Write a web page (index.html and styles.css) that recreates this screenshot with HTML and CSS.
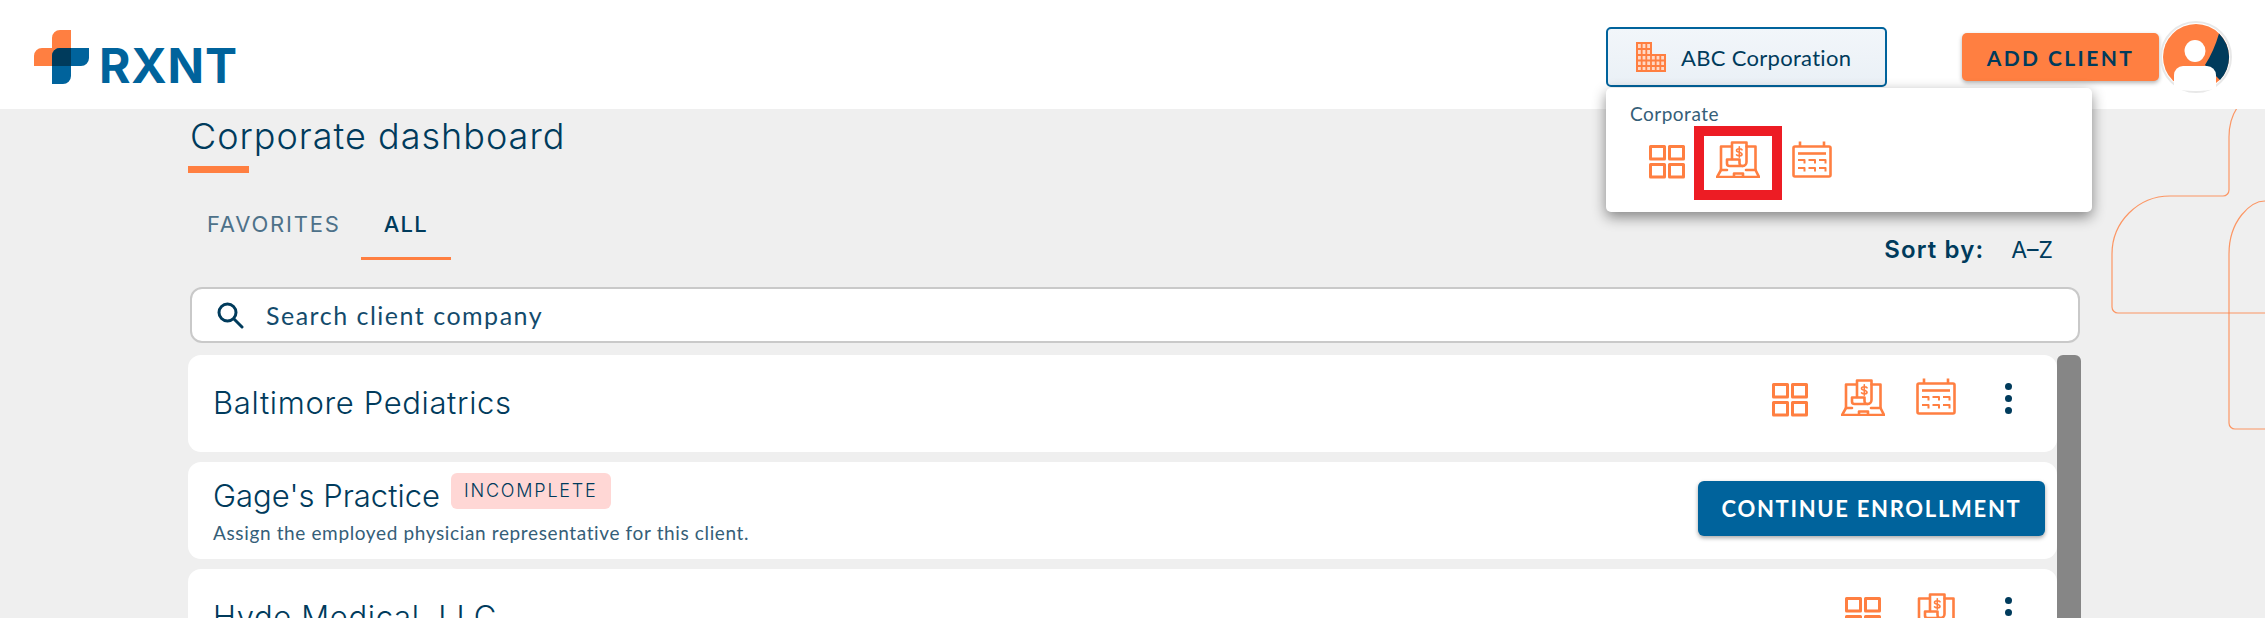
FILE: index.html
```html
<!DOCTYPE html>
<html lang="en">
<head>
    <meta charset="UTF-8">
    <title>Corporate dashboard</title>
    <link rel="stylesheet" href="styles.css">
</head>
<body>
    <svg class="sprites" width="0" height="0">
        <symbol id="ico-grid" viewBox="0 0 36 34">
            <g fill="none" stroke="#ff7f41" stroke-width="3" stroke-linejoin="round">
                <rect x="1.5" y="1.5" width="14" height="12.5"/>
                <rect x="20.5" y="1.5" width="14" height="12.5"/>
                <rect x="1.5" y="19.5" width="14" height="12.5"/>
                <rect x="20.5" y="19.5" width="14" height="12.5"/>
            </g>
        </symbol>
        <symbol id="ico-laptop" viewBox="0 0 44 37">
            <g fill="none" stroke="#ff7f41" stroke-width="2.6" stroke-linejoin="round" stroke-linecap="round">
                <path d="M15.5 5.5H5V29M30.5 5.5H39.5V29"/>
                <path d="M5 29L1 36H43L39.5 29H30M11 29H5"/>
                <path d="M18 36V32.5H27V36"/>
                <path d="M16 18V1.5H30.5V21a4 4 0 0 1-4 4"/>
                <path d="M26.5 25H13.5a2.5 2.5 0 0 1-2.500-2.500V18.500H23.500V22a3 3 0 0 0 3 3"/>
                <path d="M26 8.800C25 7.300 20.700 7.300 20.500 9.300C20.300 11.800 26 10.800 26 13.300C25.800 15.300 21.500 15.300 20.500 13.800M23.300 5.800V16.300" stroke-width="1.600"/>
            </g>
        </symbol>
        <symbol id="ico-calendar" viewBox="0 0 40 37">
            <g fill="none" stroke="#ff7f41" stroke-width="2.600" stroke-linejoin="round">
                <rect x="1.500" y="5.500" width="37" height="30" rx="1.500"/>
                <path d="M8 0.500V5.500M32 0.500V5.500"/>
                <path d="M6 12.500H34"/>
                <path d="M6 19H12.500V22.500M16.500 19H23V22.500M27 19H33.500V22.500M6 27H12.500V30.500M16.500 27H23V30.500M27 27H33.500V30.500" stroke-width="2"/>
            </g>
        </symbol>
    </svg>

    <!-- Decorative outline behind the content -->
    <svg class="backdrop" width="160" height="330" viewBox="0 0 160 330">
        <g fill="none" stroke="#ff7f41" stroke-opacity="0.8" stroke-width="1.200">
            <path d="M132 0Q124 12 124 29V82a6 6 0 0 1-6 6H65C33 88 7 114 7 146V199a6 6 0 0 0 6 6H160"/>
            <path d="M160 93C146 93 124 112 124 146V315a6 6 0 0 0 6 6H160"/>
        </g>
    </svg>

    <header class="topbar">
        <a class="logo" href="#">
            <svg width="56" height="56" viewBox="33 29 56 56">
                <path d="M71 30V66H34V56a8 8 0 0 1 8-8H52V38a8 8 0 0 1 8-8z" fill="#ff7f41"/>
                <path d="M60 48H89V58a8 8 0 0 1-8 8H71V76a8 8 0 0 1-8 8H52V56a8 8 0 0 1 8-8z" fill="#00639c"/>
                <path d="M60 48H71V66H52V56a8 8 0 0 1 8-8z" fill="#003b5c"/>
            </svg>
            <span class="logo-text">RXNT</span>
        </a>
        <div class="topbar-right">
            <div class="company">
                <button class="company-btn">
                    <svg width="30" height="30" viewBox="0 0 30 30">
                        <path d="M1 1H15V13H29V29H1z" fill="#ffd9c6" stroke="#ff7f41" stroke-width="2"/>
                        <path d="M5.700 1V29M10.300 1V29M15 13V29M19.700 13V29M24.300 13V29M1 7H15M1 13H15M1 18.500H29M1 24H29" fill="none" stroke="#ff7f41" stroke-width="1.800"/>
                    </svg>
                    <span>ABC Corporation</span>
                </button>
                <div class="company-menu">
                    <div class="menu-label">Corporate</div>
                    <div class="menu-icons">
                        <svg class="ico-grid"><use href="#ico-grid"/></svg>
                        <div class="highlight"><svg class="ico-laptop"><use href="#ico-laptop"/></svg></div>
                        <svg class="ico-cal"><use href="#ico-calendar"/></svg>
                    </div>
                </div>
            </div>
            <button class="add-client">ADD CLIENT</button>
            <svg class="avatar" width="72" height="72" viewBox="0 0 72 72">
                <circle cx="36" cy="36" r="35" fill="#fff" stroke="#e8e8e8" stroke-width="2"/>
                <circle cx="36" cy="36" r="33" fill="#ff7f41"/>
                <path d="M59 12.500A33 33 0 0 1 60 59L45 44Q54 30 59 12.500z" fill="#003b5c"/>
                <ellipse cx="35" cy="30" rx="10.500" ry="11" fill="#fff"/>
                <path d="M14 68V54a9 9 0 0 1 9-9H47a9 9 0 0 1 9 9V68Q36 72 14 68z" fill="#fff"/>
            </svg>
        </div>
    </header>

    <main class="content">
        <h1 class="page-title">Corporate dashboard</h1>
        <div class="title-rule"></div>

        <div class="toolbar">
            <div class="tabs">
                <div class="tab">FAVORITES</div>
                <div class="tab active">ALL</div>
            </div>
            <div class="sort">
                <span class="sort-label">Sort by:</span>
                <span class="sort-value">A–Z</span>
            </div>
        </div>

        <div class="search">
            <svg width="28" height="28" viewBox="0 0 28 28">
                <circle cx="11.500" cy="11.500" r="8.500" fill="none" stroke="#003b5c" stroke-width="3"/>
                <path d="M18 18L26 26" stroke="#003b5c" stroke-width="3" stroke-linecap="round"/>
            </svg>
            <span>Search client company</span>
        </div>

        <div class="list-wrap">
            <div class="client-list">
                <div class="client">
                    <div class="client-name">Baltimore Pediatrics</div>
                    <div class="client-actions">
                        <svg class="ico-grid"><use href="#ico-grid"/></svg>
                        <svg class="ico-laptop"><use href="#ico-laptop"/></svg>
                        <svg class="ico-cal"><use href="#ico-calendar"/></svg>
                        <div class="dots"><i></i><i></i><i></i></div>
                    </div>
                </div>
                <div class="client pending">
                    <div>
                        <div class="client-head">
                            <div class="client-name">Gage's Practice</div>
                            <span class="badge">INCOMPLETE</span>
                        </div>
                        <div class="client-note">Assign the employed physician representative for this client.</div>
                    </div>
                    <button class="continue">CONTINUE ENROLLMENT</button>
                </div>
                <div class="client">
                    <div class="client-name">Hyde Medical, LLC</div>
                    <div class="client-actions short">
                        <svg class="ico-grid"><use href="#ico-grid"/></svg>
                        <svg class="ico-laptop"><use href="#ico-laptop"/></svg>
                        <div class="dots"><i></i><i></i><i></i></div>
                    </div>
                </div>
            </div>
            <div class="scrollbar"></div>
        </div>
    </main>
</body>
</html>
```

FILE: styles.css
```css
html, body {
    margin: 0;
    height: 618px;
    overflow: hidden;
}
body {
    position: relative;
    background: #efefef;
    color: #003b5c;
    font-family: "Lato", "Noto Sans", sans-serif;
}
.sprites {
    position: absolute;
}
.backdrop {
    position: absolute;
    top: 108px;
    left: 2105px;
}

/* Top bar */
.topbar {
    position: relative;
    display: flex;
    align-items: center;
    justify-content: space-between;
    box-sizing: border-box;
    height: 109px;
    padding: 5px 33px 0 33px;
    background: #fff;
}
.logo {
    display: flex;
    align-items: flex-start;
    gap: 10px;
    height: 56px;
    color: #00639c;
    text-decoration: none;
}
.logo-text {
    margin-top: 8px;
    font-family: "Inter", sans-serif;
    font-size: 48px;
    font-weight: 700;
    line-height: 58px;
    letter-spacing: 0.8px;
}
.topbar-right {
    display: flex;
    align-items: center;
}
.company {
    position: relative;
    margin-right: 75px;
}
.company-btn {
    display: flex;
    align-items: center;
    gap: 15px;
    box-sizing: border-box;
    width: 281px;
    height: 60px;
    padding: 0 0 0 28px;
    border: 2px solid #00639c;
    border-radius: 5px;
    background: linear-gradient(#f2f6fa, #eaf0f6);
    color: #003b5c;
    font-family: "Lato", sans-serif;
    font-size: 22px;
    letter-spacing: 0.3px;
}
.company-menu {
    position: absolute;
    top: 61px;
    left: 0;
    box-sizing: border-box;
    width: 486px;
    height: 124px;
    padding: 15px 24px;
    border-radius: 5px;
    background: #fff;
    box-shadow: 0 5px 14px rgba(0, 0, 0, 0.45);
}
.menu-label {
    font-size: 19px;
    line-height: 22px;
    letter-spacing: 0.5px;
    color: #355e78;
}
.menu-icons {
    display: flex;
    align-items: center;
    margin-top: 1px;
    padding-left: 19px;
}
.menu-icons .ico-grid {
    margin-bottom: 3px;
}
.menu-icons .ico-cal {
    margin-bottom: 8px;
}
.highlight {
    display: flex;
    align-items: center;
    justify-content: center;
    box-sizing: border-box;
    width: 88px;
    height: 74px;
    margin: 0 10px 0 9px;
    border: 10px solid #ed1c24;
    background: #fff;
}
.highlight .ico-laptop {
    margin-bottom: 7px;
}
.ico-grid {
    width: 36px;
    height: 34px;
}
.ico-laptop {
    width: 44px;
    height: 37px;
}
.ico-cal {
    width: 40px;
    height: 37px;
}
.add-client {
    width: 197px;
    height: 48px;
    padding: 0;
    border: none;
    border-radius: 5px;
    background: #ff7f41;
    box-shadow: 0 2px 4px rgba(0, 0, 0, 0.3);
    color: #003b5c;
    font-family: "Lato", sans-serif;
    font-size: 21px;
    font-weight: 700;
    letter-spacing: 2.4px;
}
.avatar {
    margin-left: 1px;
}

/* Page content */
.content {
    position: relative;
    width: 1893px;
    margin-left: 188px;
}
.page-title {
    margin: 0;
    padding: 5px 0 0 2px;
    font-family: "Inter", sans-serif;
    font-size: 36px;
    font-weight: 300;
    line-height: 44px;
    letter-spacing: 1px;
}
.title-rule {
    width: 61px;
    height: 7px;
    margin-top: 8px;
    background: #ff7f41;
}
.toolbar {
    display: flex;
    justify-content: space-between;
    height: 114px;
}
.tabs {
    display: flex;
    align-items: flex-start;
    margin-top: 38px;
}
.tab {
    padding: 0 20px 0 19px;
    font-family: "Inter", sans-serif;
    font-size: 22px;
    line-height: 26px;
    letter-spacing: 1.800px;
    color: #4d7189;
}
.tab.active {
    height: 46px;
    padding: 0 23px;
    border-bottom: 3px solid #ff7f41;
    color: #003b5c;
    font-weight: 500;
    letter-spacing: 1.200px;
}
.sort {
    display: flex;
    align-items: baseline;
    gap: 27px;
    margin-top: 63px;
    padding-right: 28px;
    font-family: "Inter", sans-serif;
    line-height: 28px;
}
.sort-label {
    font-size: 24px;
    font-weight: 600;
    letter-spacing: 1.100px;
}
.sort-value {
    font-size: 23px;
}
.search {
    display: flex;
    align-items: center;
    gap: 22px;
    box-sizing: border-box;
    width: 1890px;
    height: 56px;
    margin-left: 2px;
    padding-left: 24px;
    border: 2px solid #c9c9c9;
    border-radius: 12px;
    background: #fff;
    color: #134b6c;
    font-size: 25px;
    letter-spacing: 1.500px;
}

/* Client rows */
.list-wrap {
    display: flex;
    margin-top: 12px;
}
.client-list {
    flex: 1;
}
.scrollbar {
    width: 24px;
    height: 263px;
    border-radius: 6px 6px 0 0;
    background: #868686;
}
.client {
    display: flex;
    align-items: center;
    justify-content: space-between;
    box-sizing: border-box;
    height: 97px;
    margin-bottom: 10px;
    padding: 0 12px 0 25px;
    border-radius: 13px;
    background: #fff;
}
.client-name {
    font-family: "Inter", sans-serif;
    font-size: 31px;
    font-weight: 300;
    line-height: 36px;
    letter-spacing: 0.650px;
}
.client > .client-name {
    margin-top: -2px;
}
.client-head {
    display: flex;
    align-items: flex-start;
    gap: 11px;
    margin-top: -2px;
}
.client-head .client-name {
    margin-top: 3px;
    letter-spacing: 0;
}
.badge {
    margin-top: -2px;
    padding: 0 13px;
    border-radius: 6px;
    background: #ffd7d5;
    font-family: "Inter", sans-serif;
    font-size: 18px;
    font-weight: 300;
    line-height: 36px;
    letter-spacing: 1.800px;
}
.client-note {
    margin-top: 8px;
    font-size: 19px;
    line-height: 22px;
    letter-spacing: 0.630px;
    color: #355e78;
}
.continue {
    width: 347px;
    height: 55px;
    margin-top: -4px;
    padding: 0;
    border: none;
    border-radius: 6px;
    background: #00639c;
    box-shadow: 0 2px 4px rgba(0, 0, 0, 0.35);
    color: #fff;
    font-family: "Lato", sans-serif;
    font-size: 22px;
    font-weight: 700;
    letter-spacing: 1.700px;
}
.client-actions {
    display: flex;
    align-self: flex-start;
    align-items: flex-start;
    margin-top: 23px;
    margin-right: 33px;
}
.client-actions .ico-grid {
    margin-top: 5px;
}
.client-actions .ico-laptop {
    margin-left: 33px;
    margin-top: 1px;
}
.client-actions .ico-cal {
    margin-left: 31px;
}
.client-actions .dots {
    margin-left: 49px;
    margin-top: 5px;
}
.client-actions.short .dots {
    margin-left: 47px;
}
.dots {
    display: flex;
    flex-direction: column;
    gap: 5px;
}
.dots i {
    display: block;
    width: 7px;
    height: 7px;
    border-radius: 50%;
    background: #003b5c;
}
```
